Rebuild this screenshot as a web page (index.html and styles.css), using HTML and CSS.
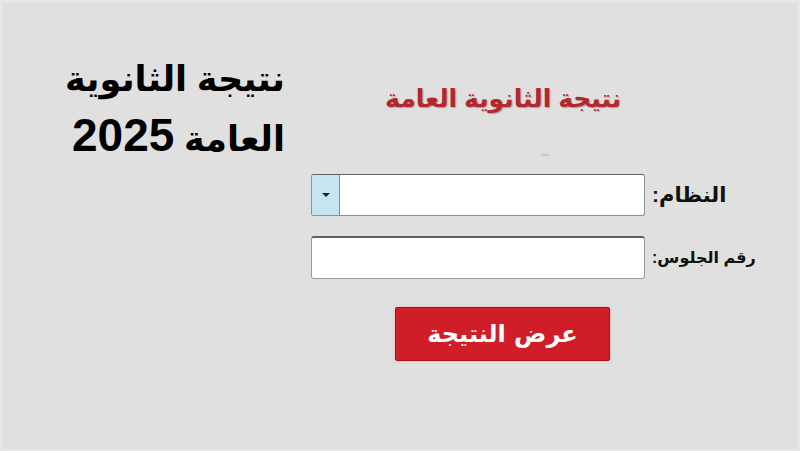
FILE: index.html
```html
<!DOCTYPE html>
<html lang="ar">
<head>
<meta charset="utf-8">
<title>نتيجة الثانوية العامة 2025</title>
<link rel="stylesheet" href="styles.css">
</head>
<body>
<main class="page">
  <h1 class="headline" dir="rtl">نتيجة الثانوية<br>العامة <span class="year">2025</span></h1>
  <section class="result-form">
    <h2 class="form-title" dir="rtl">نتيجة الثانوية العامة</h2>
    <div class="divider"></div>
    <div class="field">
      <div class="select">
        <span class="select-arrow"><span class="caret"></span></span>
        <span class="select-value"></span>
      </div>
      <label class="field-label" dir="rtl">النظام:</label>
    </div>
    <div class="field">
      <input class="text-input" type="text" dir="rtl">
      <label class="field-label field-label-small" dir="rtl">رقم الجلوس:</label>
    </div>
    <button class="submit" type="button" dir="rtl">عرض النتيجة</button>
  </section>
</main>
</body>
</html>
```
FILE: styles.css
```css
* { box-sizing: border-box; }

html, body {
  margin: 0;
  padding: 0;
}

body {
  width: 800px;
  height: 451px;
  overflow: hidden;
  background: #e0e0e0;
  font-family: "Liberation Sans", "DejaVu Sans", sans-serif;
}

.page {
  display: flex;
  align-items: flex-start;
  width: 800px;
  height: 451px;
  padding: 47px 0 0 64px;
  border: 2px solid #e8e8e8;
}

.headline {
  width: 219px;
  margin: 0;
  font-size: 35px;
  font-weight: bold;
  line-height: 60px;
  color: #000;
  text-align: right;
  white-space: nowrap;
}

.year {
  font-size: 46px;
  line-height: 0;
}

.result-form {
  display: flex;
  flex-direction: column;
  align-items: flex-start;
  margin-left: 26px;
  padding-top: 33px;
}

.form-title {
  margin: 0 0 0 74px;
  font-size: 25px;
  font-weight: bold;
  line-height: 32px;
  color: #b3272d;
  text-shadow: 1px 1px 1px rgba(80, 0, 0, 0.3);
}

.divider {
  width: 8px;
  height: 2px;
  margin: 40px 0 18px 230px;
  background: #c9c9c9;
}

.field {
  display: flex;
  align-items: center;
  gap: 7px;
  margin-bottom: 20px;
}

.select {
  display: flex;
  width: 334px;
  height: 42px;
  background: #fff;
  border: 1px solid #8d9296;
  border-top-color: #5d6266;
  border-radius: 3px;
  overflow: hidden;
}

.select-arrow {
  display: flex;
  align-items: center;
  justify-content: center;
  width: 28px;
  background: #c7e4f2;
  border-right: 1px solid #7f9099;
}

.caret {
  width: 0;
  height: 0;
  border-left: 4px solid transparent;
  border-right: 4px solid transparent;
  border-top: 4px solid #222;
}

.select-value { flex: 1; }

.text-input {
  width: 334px;
  height: 43px;
  margin: 0;
  background: #fff;
  border: 1px solid #9a9a9a;
  border-top: 2px solid #5f5f5f;
  border-radius: 3px;
  outline: none;
}

.field-label {
  font-size: 21px;
  font-weight: bold;
  color: #111;
  white-space: nowrap;
}

.field-label-small {
  font-size: 16px;
}

.submit {
  width: 215px;
  height: 54px;
  margin: 8px 0 0 84px;
  padding: 0;
  background: #cf1e27;
  border: 1px solid #9e161c;
  border-radius: 2px;
  box-shadow: 0 0 3px rgba(255, 140, 140, 0.7);
  color: #fff;
  font-family: "DejaVu Sans", sans-serif;
  font-size: 24px;
  font-weight: bold;
  cursor: pointer;
}
```
